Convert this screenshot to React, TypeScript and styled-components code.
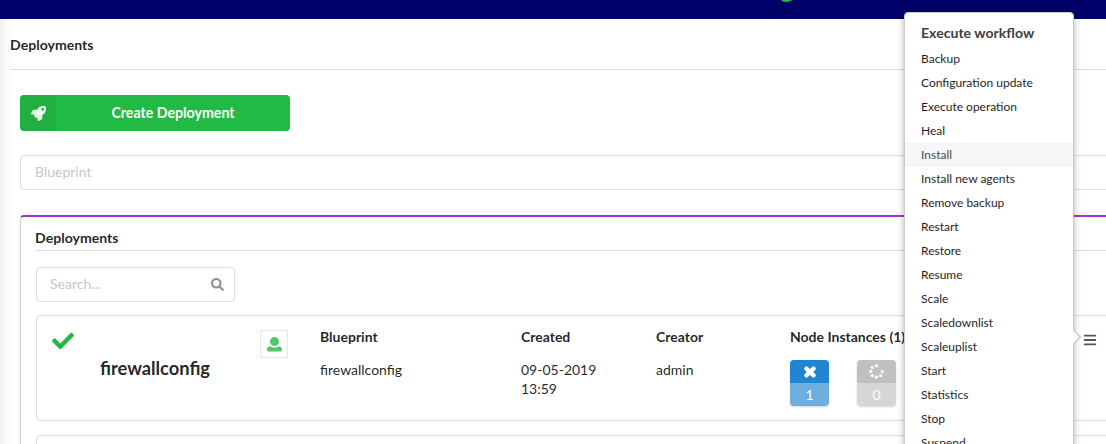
import React from 'react';
import styled, { createGlobalStyle } from 'styled-components';
import { FaBars, FaCheck, FaSearch } from 'react-icons/fa';

const GlobalStyle = createGlobalStyle`
  *, *::before, *::after { box-sizing: border-box; }
  body {
    margin: 0;
    overflow: hidden;
    background: #fff;
    color: rgba(0, 0, 0, 0.87);
    font: 14px/1.2857 Lato, sans-serif;
  }
`;

const Page = styled.div`
  position: relative;
  height: 444px;
  overflow: hidden;
`;

const NavBar = styled.header`
  position: relative;
  height: 19px;
  background: #000069;
`;

const StatusDot = styled.span`
  position: absolute;
  left: 777px;
  top: -17px;
  width: 19px;
  height: 19px;
  border-radius: 50%;
  background: #21ba45;
`;

const Main = styled.main`
  height: 425px;
  padding-left: 10px;
  background: linear-gradient(to right, #f2f2f2, #fff 13px);
`;

const PageTitle = styled.h1`
  margin: 0;
  height: 51px;
  padding-top: 17px;
  border-bottom: 1px solid #dadbdc;
  font-size: 14.1px;
  line-height: 18px;
  font-weight: 700;
`;

const Content = styled.div`
  padding: 25px 0 0 10px;
`;

const CreateButton = styled.button`
  display: flex;
  width: 270px;
  height: 36px;
  padding: 0;
  border: 0;
  border-radius: 4px;
  overflow: hidden;
  background: #21ba45;
  color: #fff;
  font: 700 14.2px/36px Lato, sans-serif;
`;

const ButtonIcon = styled.span`
  display: flex;
  align-items: center;
  justify-content: center;
  width: 36px;
  height: 36px;
  background: rgba(0, 0, 0, 0.05);
`;

const ButtonLabel = styled.span`
  flex: 1;
  text-align: center;
`;

const BlueprintField = styled.div`
  height: 35px;
  margin: 24px -10px 25px 0;
  padding: 0 14px;
  border: 1px solid #dededf;
  border-radius: 4px;
  background: #fff;
  line-height: 32px;
  color: #c7c7c7;
`;

const Segment = styled.section`
  height: 300px;
  margin-right: -10px;
  padding: 12px 0 0 14px;
  border: 1px solid #d4d4d5;
  border-top: 2px solid #a333c8;
  border-radius: 4px;
  background: #fff;
  box-shadow: 0 1px 2px rgba(34, 36, 38, 0.15);
`;

const SegmentTitle = styled.h2`
  margin: 0 0 16px;
  height: 22px;
  border-bottom: 1px solid #dadbdc;
  font-size: 14.1px;
  line-height: 17px;
  font-weight: 700;
`;

const SearchBox = styled.div`
  display: flex;
  align-items: center;
  justify-content: space-between;
  width: 199px;
  height: 35px;
  margin: 0 0 13px 1px;
  padding: 0 10px 1px 13px;
  border: 1px solid #dededf;
  border-radius: 4px;
  color: #c7c7c7;

  svg { color: #8e8e8e; }
`;

const Card = styled.article`
  display: grid;
  grid-template-columns: 223px 60px 201px 135px 134px 1fr;
  height: 106px;
  margin: 0 0 14px 1px;
  border: 1px solid #dededf;
  border-radius: 4px;
`;

const NameCell = styled.div`
  padding: 14px 0 0 15px;
  color: #21ba45;

  svg { display: block; }
`;

const DeploymentName = styled.h3`
  margin: 5px 0 0;
  padding-left: 48px;
  color: rgba(0, 0, 0, 0.87);
  font-size: 18.3px;
  line-height: 22px;
  font-weight: 700;
`;

const OwnerBox = styled.div`
  display: flex;
  align-items: center;
  justify-content: center;
  width: 28px;
  height: 28px;
  margin-top: 14px;
  border: 1px solid #e6e6e6;
  color: #4fc86b;
`;

const Column = styled.div`
  padding-top: 11px;
  line-height: 19px;
`;

const ColumnTitle = styled.div`
  margin-bottom: 14px;
  font-weight: 700;
  line-height: 19px;
  white-space: nowrap;
`;

const Badges = styled.div`
  display: flex;
  gap: 28px;
`;

const Badge = styled.div<{ $top: string; $bottom: string }>`
  display: grid;
  grid-template-rows: 23px 23px;
  width: 39px;
  border-radius: 4px;
  overflow: hidden;
  box-shadow: 0 1px 2px rgba(34, 36, 38, 0.2);
  background: linear-gradient(${p => p.$top} 50%, ${p => p.$bottom} 50%);
  color: #fff;
  place-items: center;
  line-height: 23px;
`;

const MenuTrigger = styled.span`
  position: absolute;
  left: 1083px;
  top: 333px;
  color: #555;

  svg { display: block; }
`;

const Popup = styled.nav`
  position: absolute;
  left: 904px;
  top: 12px;
  width: 170px;
  height: 460px;
  padding-top: 10px;
  border: 1px solid #c9cacb;
  border-radius: 4px;
  background: #fff;
  box-shadow: 0 2px 7px rgba(34, 36, 38, 0.35);

  &::after {
    content: '';
    position: absolute;
    top: 319px;
    right: -6px;
    width: 10px;
    height: 10px;
    border: solid #bababc;
    border-width: 1px 1px 0 0;
    background: #fff;
    transform: rotate(45deg);
  }
`;

const PopupTitle = styled.div`
  height: 24px;
  padding-left: 16px;
  font-size: 14.1px;
  line-height: 19px;
  font-weight: 700;
  color: #404040;
`;

const PopupItem = styled.div<{ $active?: boolean }>`
  height: 24px;
  padding-left: 16px;
  font-size: 12px;
  line-height: 24px;
  color: ${p => (p.$active ? '#4c4c4c' : '#1f1f1f')};
  background: ${p => (p.$active ? '#f6f6f6' : 'transparent')};
`;

const workflows = [
  'Backup', 'Configuration update', 'Execute operation', 'Heal', 'Install',
  'Install new agents', 'Remove backup', 'Restart', 'Restore', 'Resume', 'Scale',
  'Scaledownlist', 'Scaleuplist', 'Start', 'Statistics', 'Stop', 'Suspend',
];

const RocketIcon = () => (
  <svg width="15" height="15" viewBox="0 0 512 512" fill="currentColor" opacity="0.9">
    <path d="M505.1 19.1C503.8 13 499 8.2 492.9 6.9 460.7 0 435.5 0 410.4 0 307.2 0 245.3 55.2 199.1 128H94.9c-18.2 0-34.8 10.3-42.9 26.5L2.6 253.3c-8 16 3.6 34.7 21.5 34.7h95.1c-5.9 12.8-11.9 25.5-18 37.7-3.1 6.2-1.9 13.6 3 18.5l63.6 63.6c4.9 4.9 12.3 6.1 18.5 3 12.2-6.1 24.9-12 37.7-17.9V488c0 17.8 18.8 29.4 34.7 21.5l98.7-49.4c16.3-8.1 26.5-24.8 26.5-42.9V312.8c72.6-46.3 128-108.4 128-211.1.1-25.2.1-50.4-6.8-82.6zM400 160c-26.5 0-48-21.5-48-48s21.5-48 48-48 48 21.5 48 48-21.5 48-48 48z" />
  </svg>
);

const UserIcon = () => (
  <svg width="15" height="15" viewBox="0 0 15 15" fill="currentColor">
    <circle cx="7.5" cy="4.6" r="4.5" />
    <path d="M3 9.2Q7.5 11.6 12 9.2Q14.9 9.8 14.9 12.4V13.2Q14.9 14.5 13.6 14.5H1.4Q.1 14.5 .1 13.2V12.4Q.1 9.8 3 9.2Z" />
  </svg>
);

const CrossIcon = () => (
  <svg width="12" height="12" viewBox="0 0 12 12" stroke="currentColor" strokeWidth="4.2" strokeLinecap="round">
    <path d="M2.4 2.6 9.6 9.4M9.6 2.6 2.4 9.4" />
  </svg>
);

const LoaderIcon = () => (
  <svg width="15" height="15" viewBox="0 0 15 15" fill="currentColor">
    <circle cx="7.5" cy="1.8" r="1.6" />
    <circle cx="3.4" cy="3.4" r="1.6" />
    <circle cx="1.8" cy="7.5" r="1.6" />
    <circle cx="3.4" cy="11.6" r="1.6" />
    <circle cx="7.5" cy="13.2" r="1.6" />
    <circle cx="11.6" cy="11.6" r="1.6" />
    <circle cx="13.2" cy="7.5" r="1.6" />
  </svg>
);

export default function App() {
  return (
    <Page>
      <GlobalStyle />
      <NavBar><StatusDot /></NavBar>
      <Main>
        <PageTitle>Deployments</PageTitle>
        <Content>
          <CreateButton>
            <ButtonIcon><RocketIcon /></ButtonIcon>
            <ButtonLabel>Create Deployment</ButtonLabel>
          </CreateButton>
          <BlueprintField>Blueprint</BlueprintField>
          <Segment>
            <SegmentTitle>Deployments</SegmentTitle>
            <SearchBox>Search...<FaSearch size={13} /></SearchBox>
            <Card>
              <NameCell>
                <FaCheck size={22} />
                <DeploymentName>firewallconfig</DeploymentName>
              </NameCell>
              <OwnerBox><UserIcon /></OwnerBox>
              <Column>
                <ColumnTitle>Blueprint</ColumnTitle>
                firewallconfig
              </Column>
              <Column>
                <ColumnTitle>Created</ColumnTitle>
                09-05-2019<br />13:59
              </Column>
              <Column>
                <ColumnTitle>Creator</ColumnTitle>
                admin
              </Column>
              <Column>
                <ColumnTitle>Node Instances (1)</ColumnTitle>
                <Badges>
                  <Badge $top="#2185d0" $bottom="#6eafe0"><CrossIcon /><span>1</span></Badge>
                  <Badge $top="#c0c0c0" $bottom="#d6d6d6"><LoaderIcon /><span>0</span></Badge>
                </Badges>
              </Column>
            </Card>
            <Card />
          </Segment>
        </Content>
      </Main>
      <MenuTrigger><FaBars size={14} /></MenuTrigger>
      <Popup>
        <PopupTitle>Execute workflow</PopupTitle>
        {workflows.map(name => (
          <PopupItem key={name} $active={name === 'Install'}>{name}</PopupItem>
        ))}
      </Popup>
    </Page>
  );
}
